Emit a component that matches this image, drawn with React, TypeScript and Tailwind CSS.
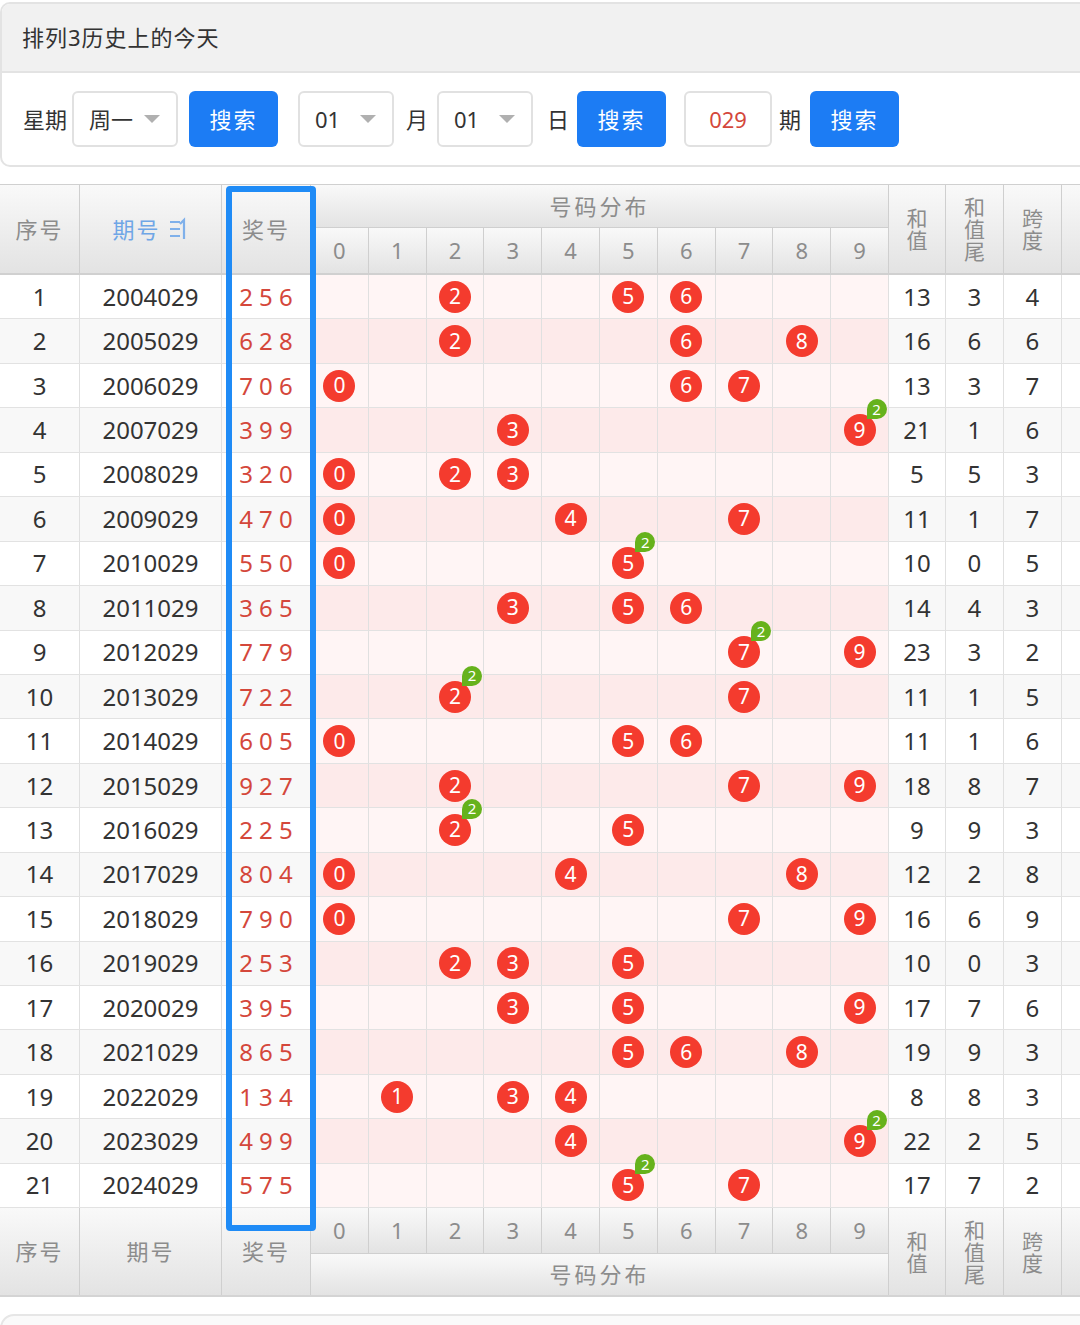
const rows: [number, string, string, number, number, number][] = [
  [1, '2004029', '256', 13, 3, 4],
  [2, '2005029', '628', 16, 6, 6],
  [3, '2006029', '706', 13, 3, 7],
  [4, '2007029', '399', 21, 1, 6],
  [5, '2008029', '320', 5, 5, 3],
  [6, '2009029', '470', 11, 1, 7],
  [7, '2010029', '550', 10, 0, 5],
  [8, '2011029', '365', 14, 4, 3],
  [9, '2012029', '779', 23, 3, 2],
  [10, '2013029', '722', 11, 1, 5],
  [11, '2014029', '605', 11, 1, 6],
  [12, '2015029', '927', 18, 8, 7],
  [13, '2016029', '225', 9, 9, 3],
  [14, '2017029', '804', 12, 2, 8],
  [15, '2018029', '790', 16, 6, 9],
  [16, '2019029', '253', 10, 0, 3],
  [17, '2020029', '395', 17, 7, 6],
  [18, '2021029', '865', 19, 9, 3],
  [19, '2022029', '134', 8, 8, 3],
  [20, '2023029', '499', 22, 2, 5],
  [21, '2024029', '575', 17, 7, 2],
];

const digits = [0, 1, 2, 3, 4, 5, 6, 7, 8, 9];

function Caret() {
  return (
    <svg width="16" height="8" viewBox="0 0 16 8" className="ml-auto">
      <path d="M0 0 H16 L8 8 Z" fill="#b0b0b0" />
    </svg>
  );
}

function Select({ value, w }: { value: string; w: string }) {
  return (
    <div className={`${w} h-[56px] border-2 border-[#e1e1e1] rounded-[6px] flex items-center pl-[15px] pr-[16px] text-[22px] text-[#333]`}>
      <span>{value}</span>
      <Caret />
    </div>
  );
}

function SearchButton({ ml }: { ml: string }) {
  return (
    <button className={`${ml} w-[89px] h-[56px] rounded-[6px] bg-[#1c7cf4] text-white text-[22px] tracking-[2px]`}>搜索</button>
  );
}

function Ball({ d, count }: { d: number; count: number }) {
  return (
    <div className="relative w-[32px] h-[32px] rounded-full bg-[#f43b2e] text-white text-[21px] leading-none flex items-center justify-center">
      {d}
      {count > 1 && (
        <span className="absolute left-[23px] top-[-15px] w-[20px] h-[20px] rounded-full rounded-bl-none bg-[#66b21c] text-white text-[15px] leading-none flex items-center justify-center">
          {count}
        </span>
      )}
    </div>
  );
}

function SortIcon() {
  return (
    <svg width="20" height="24" viewBox="0 0 20 24" className="ml-[8px]">
      <g stroke="#7fb0ea" strokeWidth="2.2" fill="none">
        <path d="M1 5 H11 M1 12 H11 M1 19 H11" />
        <path d="M15 22 V3 L11 7" />
      </g>
    </svg>
  );
}

const hd = 'bg-linear-to-b from-[#f9f9f9] to-[#e3e3e3] border-r border-[#cfcfcf] text-[#8c8c8c]';

function Stack({ chars }: { chars: string[] }) {
  return (
    <div className="flex flex-col items-center leading-[22px] text-[21px]">
      {chars.map((c, i) => (
        <span key={i}>{c}</span>
      ))}
    </div>
  );
}

function HeadSide({ children, w }: { children: React.ReactNode; w: string }) {
  return <div className={`${w} shrink-0 h-full flex items-center justify-center ${hd}`}>{children}</div>;
}

function DigitsRow() {
  return (
    <div className="flex h-[45px]">
      {digits.map((d) => (
        <div key={d} className={`w-[57.8px] shrink-0 flex items-center justify-center text-[22px] ${hd}`}>{d}</div>
      ))}
    </div>
  );
}

function Header({ footer }: { footer?: boolean }) {
  const dist = (
    <div className={`flex-1 flex items-center justify-center text-[22px] tracking-[3px] ${hd} ${footer ? 'border-t border-[#cfcfcf]' : 'border-b border-[#cfcfcf]'}`}>
      号码分布
    </div>
  );
  return (
    <div className={`flex ${footer ? 'h-[89px] border-b-2 border-[#d4d4d4]' : 'h-[91px] border-t border-b-2 border-[#d0d0d0]'}`}>
      <HeadSide w="w-[80px]"><span className="text-[22px] tracking-[2px]">序号</span></HeadSide>
      <HeadSide w="w-[142px]">
        {footer ? (
          <span className="text-[22px] tracking-[2px]">期号</span>
        ) : (
          <span className="flex items-center text-[22px] tracking-[2px] text-[#6fa6e6]">期号<SortIcon /></span>
        )}
      </HeadSide>
      <HeadSide w="w-[89px]"><span className="text-[22px] tracking-[2px]">奖号</span></HeadSide>
      <div className="w-[578px] shrink-0 flex flex-col">
        {footer ? (
          <>
            <DigitsRow />
            {dist}
          </>
        ) : (
          <>
            {dist}
            <DigitsRow />
          </>
        )}
      </div>
      <HeadSide w="w-[57px]"><Stack chars={['和', '值']} /></HeadSide>
      <HeadSide w="w-[58px]"><Stack chars={['和', '值', '尾']} /></HeadSide>
      <HeadSide w="w-[58px]"><Stack chars={['跨', '度']} /></HeadSide>
      <HeadSide w="w-[60px]"><span /></HeadSide>
    </div>
  );
}

function BodyRow({ r }: { r: [number, string, string, number, number, number] }) {
  const [idx, period, nums, sum, tail, span] = r;
  const even = idx % 2 === 0;
  const plain = even ? 'bg-[#f8f8f8]' : 'bg-white';
  const pink = even ? 'bg-[#fdeaea]' : 'bg-[#fff5f5]';
  const counts: Record<number, number> = {};
  nums.split('').forEach((c) => {
    const n = Number(c);
    counts[n] = (counts[n] || 0) + 1;
  });
  const cell = 'shrink-0 h-full flex items-center justify-center border-r border-[#e0e0e0]';
  return (
    <div className="flex h-[44.45px] border-b border-[#e2e2e2] text-[24px] text-[#333]">
      <div className={`w-[80px] ${cell} ${plain}`}>{idx}</div>
      <div className={`w-[142px] ${cell} ${plain}`}>{period}</div>
      <div className={`w-[89px] ${cell} ${plain} text-[#d4473b]`}>{nums.split('').join(' ')}</div>
      {digits.map((d) => (
        <div key={d} className={`w-[57.8px] ${cell} ${pink}`}>
          {counts[d] ? <Ball d={d} count={counts[d]} /> : null}
        </div>
      ))}
      <div className={`w-[57px] ${cell} ${plain}`}>{sum}</div>
      <div className={`w-[58px] ${cell} ${plain}`}>{tail}</div>
      <div className={`w-[58px] ${cell} ${plain}`}>{span}</div>
      <div className={`w-[60px] ${cell} ${plain}`} />
    </div>
  );
}

export default function App() {
  return (
    <div className="w-[1080px] h-[1325px] overflow-hidden bg-white font-['Noto_Sans','Noto_Sans_CJK_SC',sans-serif] pt-[2px]">
      <div className="w-[1120px] border-2 border-[#e3e3e3] rounded-l-[10px] overflow-hidden">
        <div className="h-[69px] bg-[#f1f1f1] border-b-2 border-[#e3e3e3] flex items-center pl-[20px] text-[22px] text-[#333] tracking-[1px]">
          排列3历史上的今天
        </div>
        <div className="h-[92px] flex items-center pl-[21px] text-[22px] text-[#333]">
          <span>星期</span>
          <div className="ml-[5px]"><Select value="周一" w="w-[106px]" /></div>
          <SearchButton ml="ml-[11px]" />
          <div className="ml-[20px]"><Select value="01" w="w-[96px]" /></div>
          <span className="ml-[12px]">月</span>
          <div className="ml-[9px]"><Select value="01" w="w-[96px]" /></div>
          <span className="ml-[14px]">日</span>
          <SearchButton ml="ml-[8px]" />
          <div className="ml-[18px] w-[88px] h-[56px] border-2 border-[#e1e1e1] rounded-[6px] flex items-center justify-center text-[22px] text-[#d4473b]">029</div>
          <span className="ml-[7px]">期</span>
          <SearchButton ml="ml-[9px]" />
        </div>
      </div>

      <div className="relative mt-[17px] w-[1122px]">
        <Header />
        {rows.map((r) => (
          <BodyRow key={r[0]} r={r} />
        ))}
        <Header footer />
        <div className="absolute left-[226px] top-[2px] w-[90px] h-[1045px] border-[6px] border-[#1f8bf6] rounded-[4px] pointer-events-none" />
      </div>

      <div className="mt-[17px] w-[1120px] h-[40px] border-2 border-[#e6e6e6] rounded-tl-[14px] bg-[#fafafa]" />
    </div>
  );
}
